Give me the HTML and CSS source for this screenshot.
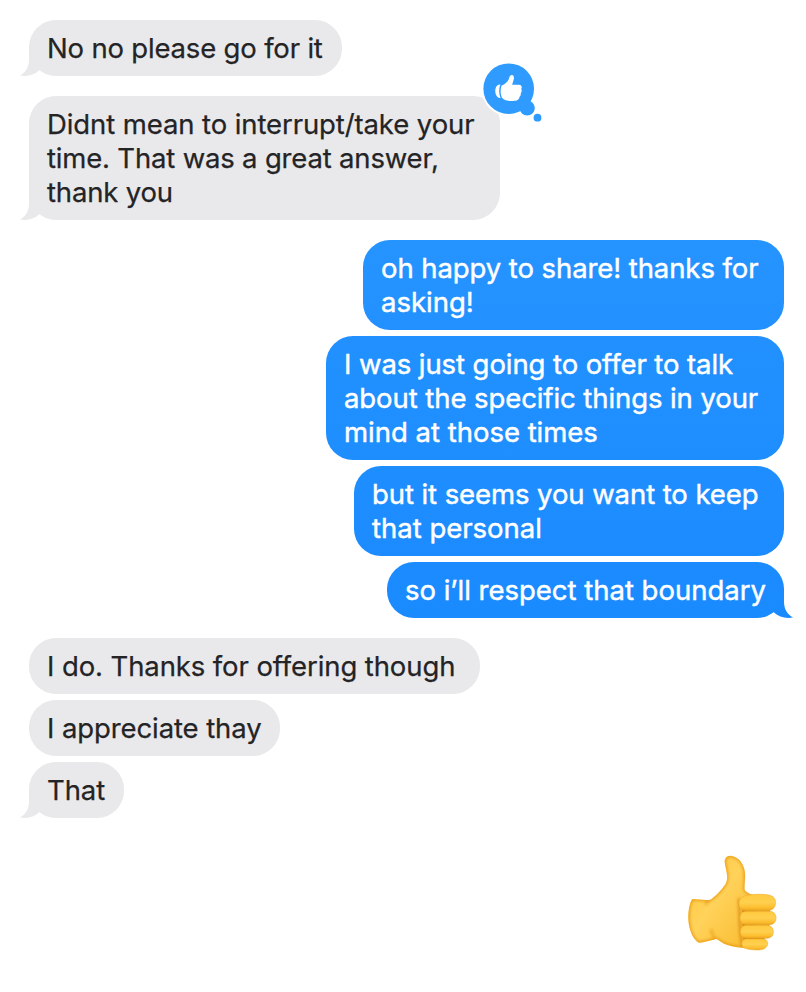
FILE: index.html
```html
<!DOCTYPE html>
<html lang="en">
<head>
<meta charset="utf-8">
<title>Messages</title>
<link rel="stylesheet" href="styles.css">
</head>
<body>
<svg width="0" height="0" class="defs" aria-hidden="true">
  <symbol id="tail" viewBox="0 0 26 30"><path d="M9 0V14C9 21 5.5 26.5 0 29.6C8 30.6 14 29.3 19.3 24.3L26 20V0Z"/></symbol>
</svg>
<main class="thread">
  <div class="bubble in w-go"><span class="line t3">No no please go for it</span><svg class="tail"><use href="#tail"/></svg></div>
  <div class="bubble in gap w-interrupt">
    <span class="line t2">Didnt mean to interrupt/take your</span><span class="line t3">time. That was a great answer,</span><span class="line t3">thank you</span>
    <svg class="tail"><use href="#tail"/></svg>
    <svg class="reaction" viewBox="0 0 66 66">
      <circle cx="28.7" cy="28.7" r="27.3" fill="#fff"/>
      <g fill="#2f9bff"><circle cx="28.7" cy="28.7" r="25.3"/><circle cx="47.2" cy="48" r="7.6"/><circle cx="57.5" cy="57.7" r="3.9"/></g>
      <path fill="#fff" d="M20.3 24.5C17 24.2 15.2 27.5 15.3 31.2C15.4 35 17.3 38 20.6 38C18.8 33.5 18.7 29 20.3 24.5Z"/>
      <path fill="#fff" d="M21.6 25.6C25.4 24.3 28.6 20.8 29.3 17.5C29.8 15.4 31 14.6 32.3 15C34.3 15.7 34.2 18.5 33.3 21.1L32.1 24.8H38.7C41.9 24.9 42.3 27.7 41.2 28.8C42.2 30.4 41.6 32.3 40.8 32.9C41.1 34.7 40.3 36.3 39.5 36.8C39.3 39.3 37.7 40.6 34.9 40.8C30.2 41.3 25.6 41 22.4 38.3C20.2 34.5 20.1 29.5 21.6 25.6Z"/>
    </svg>
  </div>
  <div class="bubble out gap w-share"><span class="line t1">oh happy to share! thanks for</span><span class="line t0">asking!</span></div>
  <div class="bubble out w-offer"><span class="line t1">I was just going to offer to talk</span><span class="line t1">about the specific things in your</span><span class="line t0">mind at those times</span></div>
  <div class="bubble out w-keep"><span class="line t1">but it seems you want to keep</span><span class="line t0">that personal</span></div>
  <div class="bubble out w-respect"><span class="line t0">so i’ll respect that boundary</span><svg class="tail"><use href="#tail"/></svg></div>
  <div class="bubble in gap w-do"><span class="line t2">I do. Thanks for offering though</span></div>
  <div class="bubble in w-thay"><span class="line t2">I appreciate thay</span></div>
  <div class="bubble in w-that"><span class="line t2">That</span><svg class="tail"><use href="#tail"/></svg></div>
  <svg class="emoji" viewBox="0 0 288 312" role="img" aria-label="Thumbs up">
    <defs>
      <linearGradient id="skin" x1="0" y1="0" x2="1" y2="1"><stop offset="0" stop-color="#ffc83a"/><stop offset=".45" stop-color="#ffd25a"/><stop offset="1" stop-color="#f9b92b"/></linearGradient>
      <linearGradient id="finger" x1="0" y1="0" x2="0" y2="1"><stop offset="0" stop-color="#ffc93d"/><stop offset=".5" stop-color="#ffd050"/><stop offset=".8" stop-color="#fdbf30"/><stop offset="1" stop-color="#eda521"/></linearGradient>
      <filter id="soft" x="-20%" y="-20%" width="140%" height="140%"><feGaussianBlur stdDeviation="5"/></filter>
      <path id="hand" d="M25 147C42 147 62 152 79 149C96 139 119 113 126 99C136 78 121 47 122 32C124 20 133 16 144 18C163 22 176 37 181 58C187 78 180 102 182 120C191 131 203 134 215 136L210 292C180 297 141 290 125 283C111 278 104 268 96 267C79 271 61 278 45 278C29 272 14 240 13 208C12 181 18 155 25 147Z"/>
      <clipPath id="hand-clip"><use href="#hand"/></clipPath>
    </defs>
    <use href="#hand" fill="url(#skin)"/>
    <g clip-path="url(#hand-clip)" fill="none" filter="url(#soft)">
      <use href="#hand" stroke="#e99a16" stroke-width="8"/>
      <path d="M165 145C168 190 165 245 176 292" stroke="#d98b17" stroke-width="7"/>
      <path d="M79 149C71 155 66 158 64 164M96 267C88 260 82 250 82 237" stroke="#e9a01c" stroke-width="6"/>
    </g>
    <path d="M174 183H258M175 225H256M178 266H242" stroke="#c9800f" stroke-width="5"/>
    <g fill="url(#finger)" stroke="#eba825" stroke-width="1.5">
      <path d="M190 136C216 131 242 133 254 135C269 138 275 146 275 158C274 172 267 181 251 182H188C170 181 165 173 165 160C165 147 173 138 190 136Z"/>
      <rect x="168" y="184" width="108" height="40" rx="18"/>
      <rect x="169" y="226" width="99" height="39" rx="18"/>
      <path d="M184 267H237C247 267 252 274 251 283C249 294 238 300 223 300C206 300 190 298 180 294C171 288 170 270 184 267Z"/>
    </g>
  </svg>
</main>
</body>
</html>
```
FILE: styles.css
```css
body {
  margin: 0;
  background: #fff;
  font-family: Inter, "Liberation Sans", sans-serif;
  font-size: 27.5px;
  line-height: 34px;
}
.defs { position: absolute; }
.thread {
  display: flex;
  flex-direction: column;
  align-items: flex-start;
  gap: 6px;
  width: 755px;
  padding: 20px 22px 0 29px;
}
.bubble {
  position: relative;
  box-sizing: border-box;
  padding: 11px 0 11px 18px;
  border-radius: 27px;
  -webkit-text-stroke: .25px currentColor;
}
.gap { margin-top: 14px; }
.in { background: #e9e9eb; color: #242426; }
.out { align-self: flex-end; color: #fff; -webkit-text-stroke-width: .45px; }
.line { display: block; white-space: nowrap; }

.w-go { width: 313px; }
.w-interrupt { width: 471px; }
.w-share { width: 421px; background: linear-gradient(#2694ff, #2291ff); }
.w-offer { width: 458px; background: linear-gradient(#2291ff, #1e8eff); }
.w-keep { width: 430px; background: linear-gradient(#1e8eff, #1b8bff); }
.w-respect { width: 397px; background: linear-gradient(#1b8bff, #1a8aff); }
.w-do { width: 451px; }
.w-thay { width: 251px; }
.w-that { width: 95px; }

.t0 { letter-spacing: -.01px; }
.t1 { letter-spacing: -.08px; }
.t2 { letter-spacing: -.1px; }
.t3 { letter-spacing: -.18px; }

.tail {
  position: absolute;
  bottom: 0;
  left: -9px;
  width: 26px;
  height: 30px;
  fill: #e9e9eb;
  z-index: -1;
}
.out .tail {
  left: auto;
  right: -9px;
  transform: scaleX(-1);
  fill: #1a8aff;
}
.reaction {
  position: absolute;
  top: -36px;
  left: 451px;
  width: 66px;
  height: 66px;
}
.emoji {
  align-self: flex-end;
  width: 96px;
  height: 104px;
  margin: 26px 4px 0 0;
}
```
